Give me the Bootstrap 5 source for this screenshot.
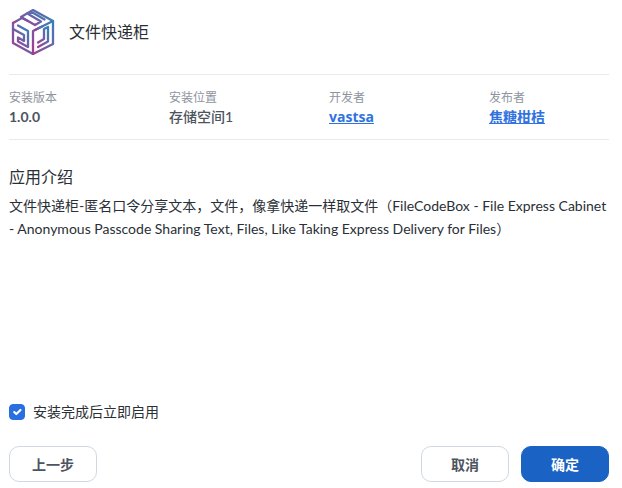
<!DOCTYPE html>
<html lang="zh"><head><meta charset="utf-8">
<link href="https://cdn.jsdelivr.net/npm/bootstrap@5.3.0/dist/css/bootstrap.min.css" rel="stylesheet">
<style>
html,body{height:100%}
body{font-family:"Lato","Noto Sans CJK SC",sans-serif;background:#fff;color:#2a2f36;font-size:14px;overflow:hidden}
.shell{height:488px;padding:0 13px 6px 9px}
.head-row{height:75px;border-bottom:1px solid #e8eaee;padding:0 0 10px 2px;gap:14px}
.logo-ic{width:44px;height:46px;flex:none}
.app-name{font-size:16px;line-height:22px;color:#2a2f36}
.facts{height:65px;border-bottom:1px solid #e8eaee;padding-top:12px}
.fact{width:160px;flex:none}
.fact-k{font-size:12px;line-height:20px;color:#8e949e;padding-top:1px}
.fact-v{font-size:14px;line-height:18px;color:#4d5460;font-weight:700}
.fact-w{font-weight:500}
.fact-v a{color:#2f72e0;font-weight:700;font-family:"Open Sans","Noto Sans CJK SC",sans-serif}
.intro-h{font-size:16px;line-height:22px;margin:26px 0 6px;font-weight:400;color:#2a2f36}
.intro-t{font-size:14px;line-height:23px;color:#2a2f36;margin:0}
.chk{min-height:0;margin:0;padding:0;gap:8px}
.chk .form-check-input{width:16px;height:16px;margin:0;float:none;background-color:#2a6fe0;border-color:#2a6fe0;border-radius:4px}
.chk .form-check-label{font-size:14px;line-height:20px;color:#2a2f36}
.foot-btn{width:88px;height:36px;padding:0;border-radius:10px;font-size:14px;font-weight:700}
.foot-light{background:#fff;border:1px solid #cfd8e3;color:#4d5460}
.foot-main{background:#1a63c4;border:1px solid #1a63c4;color:#fff}
.foot-row{margin-top:24px}
</style></head><body>
<div class="shell d-flex flex-column">
<div class="head-row d-flex align-items-center">
<svg class="logo-ic" viewBox="0 0 44 46" fill="none" stroke="url(#lg)" stroke-width="2.300" stroke-linejoin="round" stroke-linecap="round">
<defs><linearGradient id="lg" x1="0" y1="1" x2="1" y2="0"><stop offset="0" stop-color="#a83a8e"/><stop offset=".5" stop-color="#6f5fa8"/><stop offset="1" stop-color="#2f84b8"/></linearGradient></defs>
<path d="M22 45L2 34V14"/><path d="M22 45l20-10V12L22 1l-6 3.500"/>
<path d="M22 45V22l20-10"/>
<path d="M2 14l9-5 6 3"/>
<path d="M16 4.500l-6 3.500 14 8 6-3.500-12-7 3.500-2 12 7"/>
<path d="M2 20l11 6v6l-6-3.500v4L17 38V22L7 16.500"/>
<path d="M27 38l10-5.500V18l-4 2v10l-6 3.500"/>
<path d="M24 21l7-3.500"/>
</svg>
<div class="app-name">文件快递柜</div>
</div>
<div class="facts d-flex">
<div class="fact"><div class="fact-k">安装版本</div><div class="fact-v">1.0.0</div></div>
<div class="fact"><div class="fact-k">安装位置</div><div class="fact-v fact-w">存储空间1</div></div>
<div class="fact"><div class="fact-k">开发者</div><div class="fact-v"><a href="#">vastsa</a></div></div>
<div class="fact"><div class="fact-k">发布者</div><div class="fact-v"><a class="fact-w" href="#">焦糖柑桔</a></div></div>
</div>
<h2 class="intro-h">应用介绍</h2>
<p class="intro-t">文件快递柜-匿名口令分享文本，文件，像拿快递一样取文件（FileCodeBox - File Express Cabinet - Anonymous Passcode Sharing Text, Files, Like Taking Express Delivery for Files）</p>
<div class="flex-grow-1"></div>
<div class="form-check chk d-flex align-items-center">
<input class="form-check-input" type="checkbox" id="c1" checked>
<label class="form-check-label" for="c1">安装完成后立即启用</label>
</div>
<div class="d-flex foot-row gap-2">
<button class="btn foot-btn foot-light">上一步</button>
<button class="btn foot-btn foot-light ms-auto me-1">取消</button>
<button class="btn foot-btn foot-main">确定</button>
</div>
</div>
<script src="https://cdn.jsdelivr.net/npm/bootstrap@5.3.0/dist/js/bootstrap.bundle.min.js"></script>
</body></html>
